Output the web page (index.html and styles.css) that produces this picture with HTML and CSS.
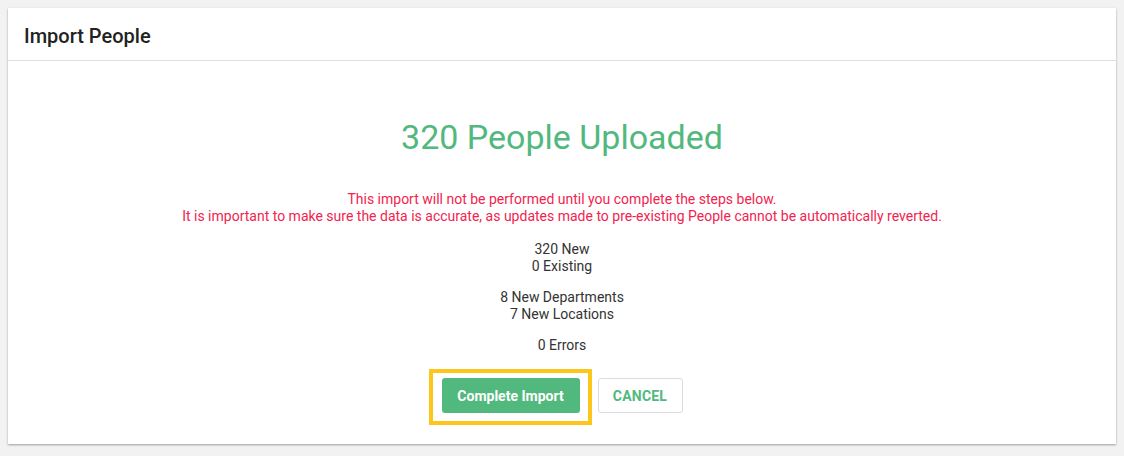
FILE: index.html
```html
<!DOCTYPE html>
<html>
<head>
<meta charset="utf-8">
<link rel="stylesheet" href="styles.css">
</head>
<body>
<div class="card">
  <div class="card-header">
    <h1 class="title">Import People</h1>
  </div>
  <div class="card-body">
    <h2 class="headline">320 People Uploaded</h2>
    <p class="warning">This import will not be performed until you complete the steps below.<br>It is important to make sure the data is accurate, as updates made to pre-existing People cannot be automatically reverted.</p>
    <p class="stat">320 New<br>0 Existing</p>
    <p class="stat">8 New Departments<br>7 New Locations</p>
    <p class="stat">0 Errors</p>
    <div class="actions">
      <div class="highlight-wrap">
        <button class="btn btn-primary">Complete Import</button>
        <span class="highlight"></span>
      </div>
      <button class="btn btn-outline">CANCEL</button>
    </div>
  </div>
</div>
</body>
</html>
```
FILE: styles.css
```css
html, body {
  margin: 0;
  padding: 0;
}
body {
  background: #f1f2f1;
  padding: 8px;
  font-family: Roboto, "Liberation Sans", Arial, sans-serif;
  color: #333;
}
.card {
  background: #fff;
  box-shadow: 0 1px 2px rgba(0, 0, 0, 0.35);
}
.card-header {
  height: 48px;
  padding: 4px 16px 0;
  border-bottom: 1px solid #e0e0e0;
  display: flex;
  align-items: center;
}
.title {
  margin: 0;
  font-size: 20px;
  font-weight: 500;
  color: #222;
}
.card-body {
  display: flex;
  flex-direction: column;
  align-items: center;
  padding: 56px 16px 31px;
  text-align: center;
}
.headline {
  margin: 0 0 34px;
  font-size: 34px;
  line-height: 40px;
  font-weight: 400;
  color: #52b87e;
}
.warning {
  margin: 0 0 16px;
  font-size: 14px;
  line-height: 17px;
  color: #f2234f;
}
.stat {
  margin: 0 0 14px;
  font-size: 14px;
  line-height: 17px;
  color: #333;
}
.actions {
  display: flex;
  gap: 18px;
  margin-top: 10px;
}
.highlight-wrap {
  position: relative;
}
.highlight {
  position: absolute;
  top: -9px;
  bottom: -12px;
  left: -13px;
  right: -12px;
  border: 4px solid #fcc71a;
  pointer-events: none;
}
.btn {
  height: 35px;
  font-family: Roboto, "Liberation Sans", Arial, sans-serif;
  font-size: 14px;
  border-radius: 3px;
  cursor: pointer;
}
.btn-primary {
  width: 138px;
  background: #52b97e;
  border: none;
  color: #fff;
  font-weight: 700;
}
.btn-outline {
  width: 85px;
  background: #fff;
  border: 1px solid #dcdcdc;
  color: #52b97e;
  font-weight: 700;
  letter-spacing: 0.2px;
}
```
